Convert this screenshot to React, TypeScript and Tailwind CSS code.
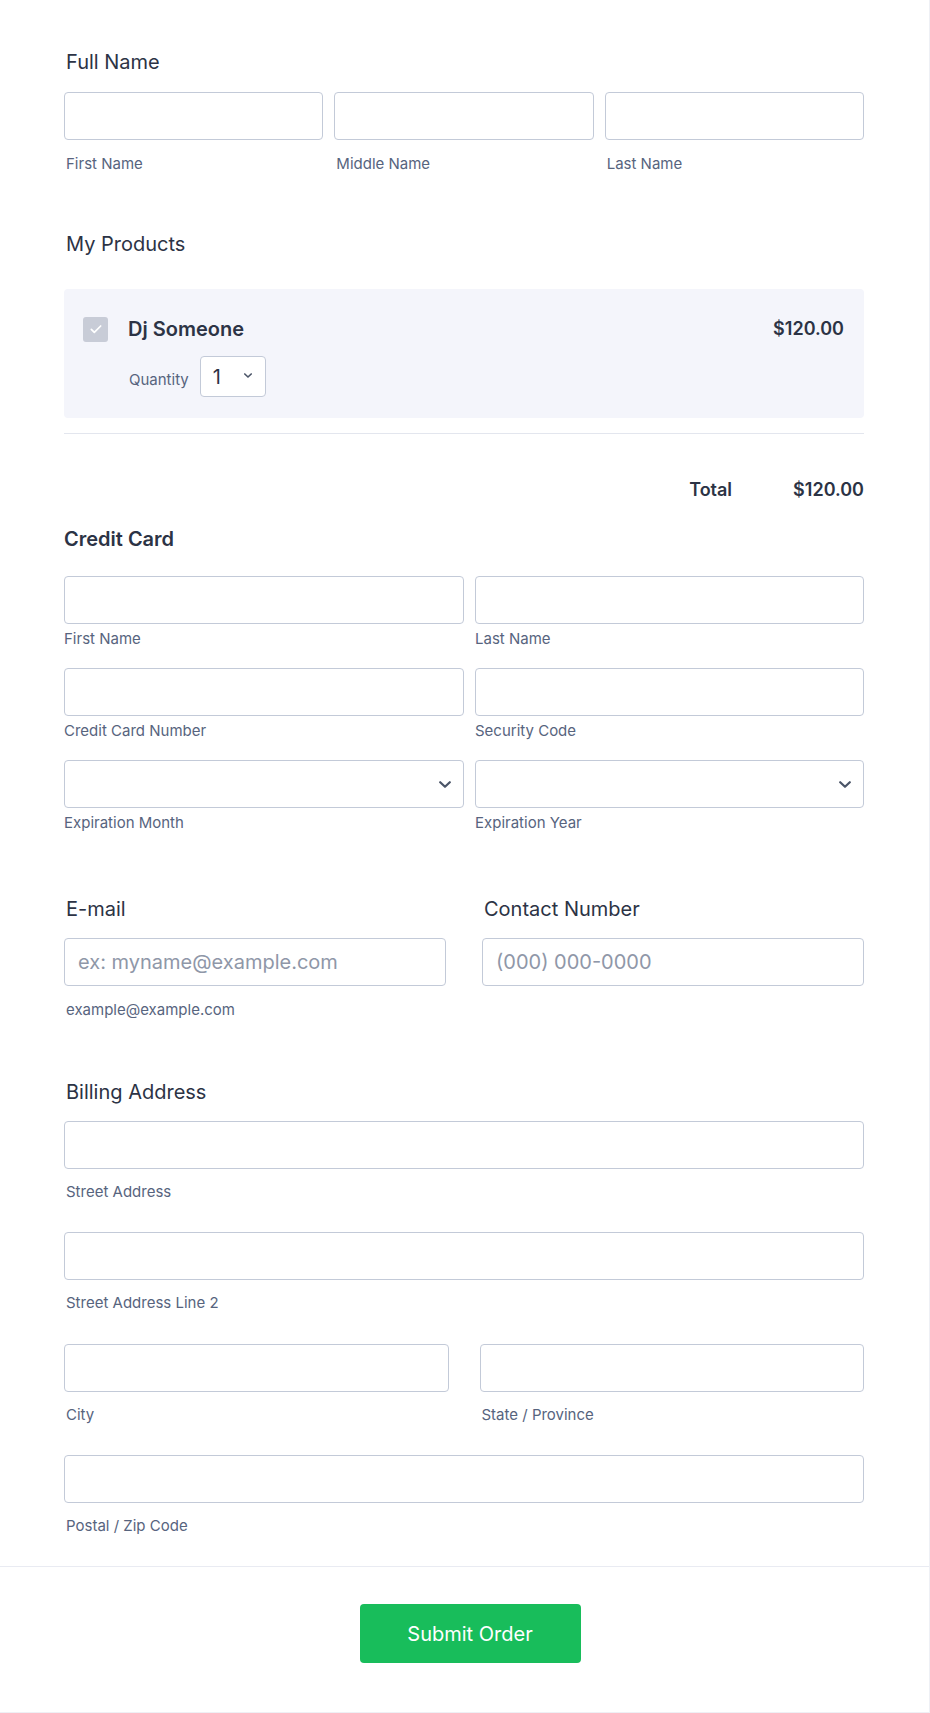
import React from "react";

const labelCls = "text-[20px] leading-[28px] text-[#2c3345]";
const subCls = "text-[15px] leading-[20px] text-[#57647e]";
const inputCls =
  "block w-full h-12 rounded-[4px] border border-[#c3cad8] bg-white px-[13px] text-[20px] text-[#2c3345] placeholder:text-[#8f97a8] outline-none";

function Chevron({ w, h, sw }: { w: number; h: number; sw: number }) {
  return (
    <svg width={w} height={h} viewBox="0 0 12 7" fill="none">
      <path d="M1.2 1.2L6 5.8l4.8-4.6" stroke="#4b5568" strokeWidth={sw} strokeLinecap="round" strokeLinejoin="round" />
    </svg>
  );
}

function Field({ sub }: { sub: string }) {
  return (
    <div>
      <input className={inputCls} />
      <div className={`${subCls} mt-[5px]`}>{sub}</div>
    </div>
  );
}

function SelectField({ sub }: { sub: string }) {
  return (
    <div>
      <div className="flex h-12 items-center justify-end rounded-[4px] border border-[#c3cad8] bg-white pr-[12px]">
        <Chevron w={12} h={7} sw={2.2} />
      </div>
      <div className={`${subCls} mt-[5px]`}>{sub}</div>
    </div>
  );
}

function AddrField({ sub }: { sub: string }) {
  return (
    <div>
      <input className={inputCls} />
      <div className={`${subCls} mt-[13px] pl-[2px]`}>{sub}</div>
    </div>
  );
}

export default function App() {
  return (
    <div className="w-[930px] bg-white border-r border-b border-[#eef0f5] font-[family-name:Inter,sans-serif]">
      <div className="pl-16 pr-[65px] pt-[48px]">
        {/* Full Name */}
        <div className={`${labelCls} pl-[2px]`}>Full Name</div>
        <div className="mt-4 grid grid-cols-3 gap-x-[11px]">
          {["First Name", "Middle Name", "Last Name"].map((s) => (
            <div key={s}>
              <input className={inputCls} />
              <div className={`${subCls} mt-[14px] pl-[2px]`}>{s}</div>
            </div>
          ))}
        </div>

        {/* My Products */}
        <div className={`${labelCls} mt-[56px] pl-[2px]`}>My Products</div>
        <div className="mt-[31px] rounded-[4px] bg-[#f4f5fb] pt-[26px] pb-[21px] pl-[19px] pr-[20px]">
          <div className="flex h-[28px] items-center justify-between">
            <div className="flex items-center gap-[20px]">
              <div className="flex h-[25px] w-[25px] items-center justify-center rounded-[3px] bg-[#c8ccd7]">
                <svg width="16" height="16" viewBox="0 0 24 24" fill="none">
                  <path d="M5 12.5l4.5 4.5L19 7.5" stroke="#ffffff" strokeWidth="2.6" strokeLinecap="round" strokeLinejoin="round" />
                </svg>
              </div>
              <span className="text-[20px] leading-[28px] font-semibold text-[#2c3345]">Dj Someone</span>
            </div>
            <span className="text-[18px] leading-[28px] font-semibold text-[#2c3345]">$120.00</span>
          </div>
          <div className="mt-[13px] flex items-center gap-[11px] pl-[46px]">
            <span className={`${subCls} pt-[7px]`}>Quantity</span>
            <div className="flex h-[41px] w-[66px] items-center justify-between rounded-[4px] border border-[#c3cad8] bg-white pl-[12px] pr-[13px]">
              <span className="text-[20px] leading-[28px] text-[#2c3345]">1</span>
              <div className="-mt-[3px]">
                <Chevron w={8} h={5} sw={2.4} />
              </div>
            </div>
          </div>
        </div>
        <div className="mt-[15px] h-px bg-[#e3e6ee]" />

        {/* Total */}
        <div className="mt-[42px] flex h-[28px] items-center justify-end gap-[61px]">
          <span className="text-[18px] leading-[28px] font-semibold text-[#2c3345]">Total</span>
          <span className="text-[18px] leading-[28px] font-semibold text-[#2c3345]">$120.00</span>
        </div>

        {/* Credit Card */}
        <div className="mt-[21px] text-[20px] leading-[28px] font-semibold text-[#2c3345]">Credit Card</div>
        <div className="mt-[23px] grid grid-cols-[400px_1fr] gap-x-[11px] gap-y-[19px]">
          <Field sub="First Name" />
          <Field sub="Last Name" />
          <Field sub="Credit Card Number" />
          <Field sub="Security Code" />
          <SelectField sub="Expiration Month" />
          <SelectField sub="Expiration Year" />
        </div>

        {/* Email / Contact */}
        <div className="mt-[62px] grid grid-cols-2 gap-x-[36px]">
          <div>
            <div className={`${labelCls} pl-[2px]`}>E-mail</div>
            <input className={`${inputCls} mt-[15px]`} placeholder="ex: myname@example.com" />
            <div className={`${subCls} mt-[14px] pl-[2px]`}>example@example.com</div>
          </div>
          <div>
            <div className={`${labelCls} pl-[2px]`}>Contact Number</div>
            <input className={`${inputCls} mt-[15px]`} placeholder="(000) 000-0000" />
          </div>
        </div>

        {/* Billing Address */}
        <div className={`${labelCls} mt-[58px] pl-[2px]`}>Billing Address</div>
        <div className="mt-[15px]">
          <AddrField sub="Street Address" />
        </div>
        <div className="mt-[30px]">
          <AddrField sub="Street Address Line 2" />
        </div>
        <div className="mt-[31px] grid grid-cols-2 gap-x-[31px]">
          <AddrField sub="City" />
          <AddrField sub="State / Province" />
        </div>
        <div className="mt-[30px]">
          <AddrField sub="Postal / Zip Code" />
        </div>
      </div>

      <div className="mt-[30px] h-px bg-[#e9ebf2]" />

      <div className="flex justify-center pl-[11px] pt-[37px] pb-[49px]">
        <button className="h-[59px] w-[221px] rounded-[4px] bg-[#18bd5b] text-[20px] text-white">
          Submit Order
        </button>
      </div>
    </div>
  );
}
